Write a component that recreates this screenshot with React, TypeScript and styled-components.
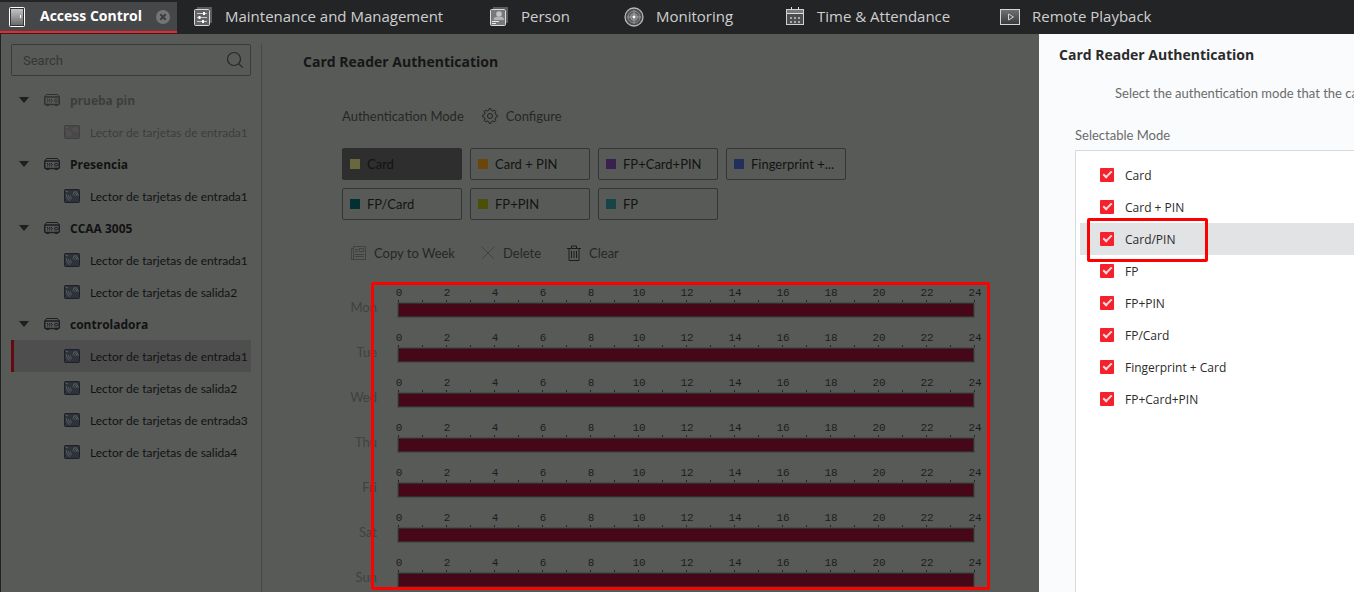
import React from "react";
import styled, { createGlobalStyle } from "styled-components";

const GlobalStyle = createGlobalStyle`
  *, *::before, *::after { box-sizing: border-box; }
  body {
    margin: 0;
    background: #585a58;
    font-family: "Open Sans", "Noto Sans", sans-serif;
    font-size: 12px;
    color: #151515;
  }
  button, input { font-family: inherit; font-size: inherit; color: inherit; }
  h1, h2, p, ul { margin: 0; padding: 0; }
  ul { list-style: none; }
`;

const Shell = styled.div`
  min-height: 100vh;
  display: flex;
  flex-direction: column;
  overflow: hidden;
`;

const TopBar = styled.nav`
  height: 34px;
  padding: 2px 0 1px;
  display: flex;
  background: #232426;
`;

const Tab = styled.button<{ $active?: boolean; $width: number }>`
  flex: 0 0 ${(p) => p.$width}px;
  display: flex;
  align-items: center;
  gap: 12px;
  border: 0;
  border-bottom: 2px solid ${(p) => (p.$active ? "#f4222c" : "transparent")};
  padding: 0 6px 0 ${(p) => (p.$active ? 8 : 16)}px;
  background: ${(p) => (p.$active ? "#464749" : "transparent")};
  color: ${(p) => (p.$active ? "#ffffff" : "#cfcfcf")};
  font-size: ${(p) => (p.$active ? 14 : 15)}px;
  font-weight: ${(p) => (p.$active ? 700 : 400)};
  line-height: 20px;
  white-space: nowrap;
  text-align: left;
  svg { flex: none; }
  svg:last-child:not(:first-child) { margin-left: auto; }
`;

const TabLabel = styled.span`
  padding-bottom: 2px;
`;

const Body = styled.div`
  flex: 1;
  display: flex;
  border-left: 1px solid #202122;
`;

const Sidebar = styled.aside`
  flex: 0 0 261px;
  min-width: 0;
  margin-top: 10px;
  padding: 0 10px;
  border-right: 1px solid #464746;
`;

const SearchBox = styled.label`
  display: flex;
  align-items: center;
  height: 32px;
  padding: 0 6px 0 11px;
  border: 1px solid #3a3b3a;
  border-radius: 2px;
`;

const SearchInput = styled.input`
  flex: 1;
  min-width: 0;
  border: 0;
  outline: 0;
  padding: 0;
  background: transparent;
  font-family: Roboto, sans-serif;
  font-size: 13px;
  &::placeholder { color: #353635; opacity: 1; }
`;

const Tree = styled.ul`
  && { margin-top: 8px; }
`;

const TreeRow = styled.button<{ $disabled?: boolean; $selected?: boolean }>`
  width: 100%;
  height: 32px;
  display: flex;
  align-items: center;
  gap: 10px;
  border: 0;
  border-left: 3px solid ${(p) => (p.$selected ? "#660a12" : "transparent")};
  padding: 0;
  background: ${(p) => (p.$selected ? "#4f4e4e" : "transparent")};
  color: ${(p) => (p.$disabled ? "#3d3d3d" : "#121212")};
  white-space: nowrap;
  svg { flex: none; }
`;

const DeviceRow = styled(TreeRow)`
  padding-left: 5px;
  font-weight: 700;
`;

const ReaderRow = styled(TreeRow)`
  padding-left: 50px;
  font-family: Lato, "Open Sans", sans-serif;
`;

const Caret = styled.span`
  margin-right: 5px;
  border: 5px solid transparent;
  border-top: 6px solid #1d1e1d;
  border-bottom: 0;
`;

const Main = styled.main`
  flex: 1 1 0;
  min-width: 0;
  padding: 17px 0 0 41px;
`;

const Title = styled.h1`
  font-size: 14px;
  line-height: 22px;
  font-weight: 700;
  color: #161616;
`;

const Content = styled.div`
  padding: 32px 0 0 39px;
  font-family: Lato, "Open Sans", sans-serif;
`;

const ConfigRow = styled.div`
  display: flex;
  align-items: center;
  gap: 18px;
  height: 22px;
  font-size: 13px;
  color: #262726;
`;

const TextButton = styled.button`
  display: flex;
  align-items: center;
  gap: 8px;
  border: 0;
  padding: 0;
  background: transparent;
  font-size: 13px;
  color: #262726;
  white-space: nowrap;
`;

const ModeGrid = styled.div`
  display: grid;
  grid-template-columns: repeat(4, 120px);
  grid-auto-rows: 32px;
  gap: 8px;
  margin-top: 21px;
`;

const ModeButton = styled.button<{ $active?: boolean }>`
  display: flex;
  align-items: center;
  gap: 7px;
  border: 1px solid ${(p) => (p.$active ? "#2c2c2c" : "#343534")};
  border-radius: 2px;
  padding: 0 7px;
  background: ${(p) => (p.$active ? "#2e2e2e" : "transparent")};
  color: #131313;
  font-size: 13px;
  white-space: nowrap;
`;

const Swatch = styled.span<{ $color: string }>`
  width: 10px;
  height: 10px;
  background: ${(p) => p.$color};
`;

const Tools = styled.div`
  display: flex;
  align-items: center;
  gap: 26px;
  height: 22px;
  margin: 22px 0 0 9px;
`;

const Schedule = styled.div`
  position: relative;
  width: 647px;
  margin-top: 18px;
  padding: 4px 0 0;
`;

const Day = styled.div`
  display: flex;
  gap: 20px;
  height: 45px;
`;

const DayName = styled.span`
  width: 35px;
  padding-top: 11px;
  line-height: 20px;
  text-align: right;
  font-size: 13px;
  color: #404140;
`;

const Track = styled.div`
  width: 578px;
`;

const Hours = styled.div`
  display: flex;
  margin: 0 -22px;
  height: 14px;
`;

const Hour = styled.span`
  flex: 0 0 48px;
  text-align: center;
  font-family: "Liberation Mono", monospace;
  font-size: 11px;
  line-height: 14px;
  color: #1c1d1c;
`;

const Ticks = styled.div`
  height: 2px;
  margin-left: 1px;
  background: repeating-linear-gradient(to right, #222322 0 1px, transparent 1px 24px);
`;

const Bar = styled.div`
  height: 16px;
  border: 2px solid #2e302f;
  outline: 1px solid #4b4c4b;
  outline-offset: -1px;
  background: #460818;
`;

const ScheduleMark = styled.div`
  position: absolute;
  inset: 0 -1px auto 29px;
  height: 308px;
  border: 3px solid #ff0000;
  border-radius: 2px;
  pointer-events: none;
`;

const Drawer = styled.aside`
  flex: 0 0 315px;
  min-width: 0;
  display: flex;
  flex-direction: column;
  overflow: hidden;
  padding-top: 10px;
  background: #fafbfd;
`;

const DrawerTitle = styled.h2`
  padding-left: 20px;
  font-size: 14px;
  line-height: 22px;
  font-weight: 700;
  color: #2b2b2b;
`;

const DrawerText = styled.p`
  font-family: Lato, "Open Sans", sans-serif;
  font-size: 13px;
  line-height: 22px;
  color: #6b6b6b;
  white-space: nowrap;
`;

const Hint = styled(DrawerText)`
  && { padding: 16px 0 0 76px; }
`;

const ListLabel = styled(DrawerText)`
  && { padding: 20px 0 0 36px; }
`;

const Options = styled.ul`
  && {
    margin: 4px 0 0 36px;
    padding: 8px 0 0 4px;
  }
  flex: 1;
  border: 1px solid #d9dadc;
  border-width: 1px 0 0 1px;
  background: #ffffff;
`;

const Option = styled.li<{ $selected?: boolean }>`
  position: relative;
  background: ${(p) => (p.$selected ? "#e2e3e5" : "transparent")};
`;

const OptionLabel = styled.label`
  display: flex;
  align-items: center;
  gap: 11px;
  height: 32px;
  padding-left: 20px;
  color: #2b2b2b;
`;

const CheckBox = styled.input`
  appearance: none;
  position: relative;
  width: 14px;
  height: 14px;
  margin: 0;
  border-radius: 1px;
  background: #f5222d;
  &::after {
    content: "";
    position: absolute;
    left: 5px;
    top: 1px;
    width: 5px;
    height: 9px;
    border: solid #ffd9da;
    border-width: 0 2px 2px 0;
    transform: rotate(45deg);
  }
`;

const OptionMark = styled.div`
  position: absolute;
  left: 7px;
  top: -5px;
  width: 121px;
  height: 44px;
  border: 3px solid #ff0000;
  border-radius: 2px;
  pointer-events: none;
`;

const DoorIcon = () => (
  <svg width="20" height="22" viewBox="0 0 20 22">
    <defs>
      <linearGradient id="door" x1="0" y1="0" x2="0" y2="1">
        <stop offset="0" stopColor="#c4c4c4" /><stop offset="1" stopColor="#6c6c6c" />
      </linearGradient>
    </defs>
    <rect x="1.5" y="1.5" width="15" height="19" rx="1" fill="#333" stroke="#fff" />
    <rect x="3" y="3" width="12" height="16" fill="url(#door)" />
    <rect x="12" y="9" width="1" height="3" fill="#fff" />
  </svg>
);

const CloseIcon = () => (
  <svg width="16" height="16" viewBox="0 0 16 16">
    <circle cx="8" cy="8" r="7" fill="#747577" />
    <path d="M5.3 5.3l5.4 5.4M10.7 5.3l-5.4 5.4" stroke="#3c3d3f" strokeWidth="2" />
  </svg>
);

const MaintenanceIcon = () => (
  <svg width="20" height="20" viewBox="0 0 20 20">
    <path d="M4 0h15v16h-2V2H4z" fill="#5c5d5f" />
    <rect x="1.5" y="2.5" width="15" height="16" rx="1" fill="#626366" stroke="#dadada" />
    <path d="M4 6.5h10M4 10.5h10M4 14.5h10" stroke="#c9c9c9" />
    <path d="M11 5v3M6.5 9v3M10 13v3" stroke="#fff" strokeWidth="2" />
  </svg>
);

const PersonIcon = () => (
  <svg width="20" height="20" viewBox="0 0 20 20">
    <path d="M4 0h15v16h-2V2H4z" fill="#5c5d5f" />
    <rect x="1.5" y="2.5" width="15" height="16" rx="1" fill="#77787a" stroke="#dadada" />
    <circle cx="10" cy="7" r="2.8" fill="#c4c4c4" />
    <path d="M4.5 13c0-3 3-3.500 5.500-3.500s5 .5 5 3.500z" fill="#b4b4b4" />
    <path d="M3 14.500h7M3 16.500h4" stroke="#e8e8e8" />
  </svg>
);

const MonitorIcon = () => (
  <svg width="20" height="20" viewBox="0 0 20 20">
    <circle cx="10" cy="10" r="9" fill="#4c4d4f" stroke="#b9b9b9" strokeWidth="1.3" />
    <circle cx="10" cy="10" r="6" fill="#5c5d5f" stroke="#8b8b8b" />
    <circle cx="10" cy="10" r="3.4" fill="#737477" stroke="#aaa" strokeWidth=".7" />
    <path d="M10 3v14M3 10h14" stroke="#a2a2a2" strokeWidth=".8" />
    <circle cx="10" cy="10" r="1.4" fill="#fff" />
  </svg>
);

const CalendarIcon = () => (
  <svg width="20" height="20" viewBox="0 0 20 20">
    <rect x="1.5" y="2.5" width="17" height="15" fill="#4c4d4f" stroke="#d0d0d0" />
    <path d="M2 4.500h16" stroke="#77787a" strokeWidth="3" />
    <path d="M6.500 0v3M13.500 0v3M2 6.500h16" stroke="#dedede" />
    <path d="M5 11h10M5 15h10" stroke="#a9a9a9" strokeWidth="2" strokeDasharray="2 2" />
  </svg>
);

const PlaybackIcon = () => (
  <svg width="20" height="18" viewBox="0 0 20 18">
    <defs>
      <linearGradient id="screen" x1="0" y1="0" x2="0" y2="1">
        <stop offset="0" stopColor="#717274" /><stop offset="1" stopColor="#38393b" />
      </linearGradient>
    </defs>
    <rect x=".5" y="1.5" width="19" height="15" fill="url(#screen)" stroke="#d5d5d5" />
    <path d="M8.5 6v6l5-3z" fill="#55565a" stroke="#d0d0d0" />
  </svg>
);

const SearchIcon = () => (
  <svg width="18" height="18" viewBox="0 0 18 18" fill="none" stroke="#262726" strokeWidth="1.2">
    <circle cx="8" cy="8" r="6.5" />
    <path d="M12.7 12.7l4 4" />
  </svg>
);

const DeviceIcon = ({ muted }: { muted?: boolean }) => {
  const ink = muted ? "#303130" : "#1b1e23";
  return (
    <svg width="16" height="14" viewBox="0 0 16 14" fill="none" stroke={ink}>
      <path d="M.5 4L2.500 1.500h11L15.500 4" />
      <rect x=".75" y="4" width="14.500" height="7.500" rx="1" strokeWidth="1.500" />
      <path d="M2 12.500h3M11 12.500h3" />
      <path d="M3 6.500h6M3 9h6" strokeDasharray="1 1" />
      <path d="M3 7.700h6" strokeWidth=".6" />
      <circle cx="12" cy="7.700" r="1.500" />
    </svg>
  );
};

const ReaderIcon = ({ muted }: { muted?: boolean }) => (
  <svg width="16" height="14" viewBox="0 0 16 14" fill="none">
    <rect x=".5" y=".5" width="15" height="13" rx="1" fill={muted ? "#4a4848" : "#2e333b"} stroke={muted ? "#414040" : "#1c1f24"} />
    <g stroke={muted ? "#5a5a5a" : "#5d6166"} strokeWidth=".9" strokeLinecap="round">
      <path d="M2.500 2.500h.6" strokeWidth="1.400" />
      <path d="M2.500 5.500c0 2 .8 4.500 2.800 6M4.600 6.500c0 1.500.5 3 1.700 4M6.600 7c0 .8.200 1.700.9 2.500" />
      <path d="M8.500 5.500c.6-1.500 2-.8 2.300.8M9.500 3.500c1.500-.8 3 .8 3.100 2.800M11 2.500c1.800 0 3 1.700 3.200 4" />
    </g>
  </svg>
);

const gearPoints = Array.from({ length: 32 }, (_, i) => {
  const radius = i % 4 < 2 ? 7.4 : 5.7;
  const angle = ((i - 0.5) * Math.PI) / 16;
  return `${(8 + radius * Math.cos(angle)).toFixed(2)},${(8 + radius * Math.sin(angle)).toFixed(2)}`;
}).join(" ");

const GearIcon = () => (
  <svg width="16" height="16" viewBox="0 0 16 16" fill="none" stroke="#1f201f">
    <polygon points={gearPoints} strokeLinejoin="round" />
    <circle cx="8" cy="8" r="2.5" />
  </svg>
);

const CopyIcon = () => (
  <svg width="15" height="16" viewBox="0 0 15 16" fill="none" stroke="#414241">
    <path d="M2.5 3.5H.5v11h12" />
    <rect x="2.5" y="1.5" width="12" height="13" />
    <rect x="8.5" y="3.5" width="4" height="3" />
    <path d="M4 4.5h3M4 6.5h3M4 9.5h9M4 11.5h9" />
  </svg>
);

const CrossIcon = () => (
  <svg width="14" height="14" viewBox="0 0 14 14" fill="none" stroke="#414241">
    <path d="M1 1l12 12M13 1L1 13" />
  </svg>
);

const TrashIcon = () => (
  <svg width="14" height="16" viewBox="0 0 14 16" fill="none" stroke="#1c1d1c">
    <path d="M0 3.5h14M4.5 3V1h5v2M2 4v11.500h10V4M4.500 6v7M7 6v7M9.500 6v7" />
  </svg>
);

const devices = [
  { name: "prueba pin", muted: true, readers: ["Lector de tarjetas de entrada1"] },
  { name: "Presencia", readers: ["Lector de tarjetas de entrada1"] },
  { name: "CCAA 3005", readers: ["Lector de tarjetas de entrada1", "Lector de tarjetas de salida2"] },
  {
    name: "controladora",
    selected: 0,
    readers: [
      "Lector de tarjetas de entrada1",
      "Lector de tarjetas de salida2",
      "Lector de tarjetas de entrada3",
      "Lector de tarjetas de salida4",
    ],
  },
];

const modes = [
  { name: "Card", color: "#67683e" },
  { name: "Card + PIN", color: "#6b4608" },
  { name: "FP+Card+PIN", color: "#38204f" },
  { name: "Fingerprint +...", color: "#20305a" },
  { name: "FP/Card", color: "#023030" },
  { name: "FP+PIN", color: "#4b4f08" },
  { name: "FP", color: "#174444" },
];

const days = ["Mon", "Tue", "Wed", "Thu", "Fri", "Sat", "Sun"];
const hours = Array.from({ length: 13 }, (_, i) => i * 2);
const options = ["Card", "Card + PIN", "Card/PIN", "FP", "FP+PIN", "FP/Card", "Fingerprint + Card", "FP+Card+PIN"];

export default function App() {
  return (
    <Shell>
      <GlobalStyle />
      <TopBar>
        <Tab $active $width={177}><DoorIcon /><TabLabel>Access Control</TabLabel><CloseIcon /></Tab>
        <Tab $width={296}><MaintenanceIcon /><TabLabel>Maintenance and Management</TabLabel></Tab>
        <Tab $width={135}><PersonIcon /><TabLabel>Person</TabLabel></Tab>
        <Tab $width={161}><MonitorIcon /><TabLabel>Monitoring</TabLabel></Tab>
        <Tab $width={215}><CalendarIcon /><TabLabel>Time &amp; Attendance</TabLabel></Tab>
        <Tab $width={200}><PlaybackIcon /><TabLabel>Remote Playback</TabLabel></Tab>
      </TopBar>
      <Body>
        <Sidebar>
          <SearchBox>
            <SearchInput type="text" placeholder="Search" aria-label="Search" />
            <SearchIcon />
          </SearchBox>
          <Tree>
            {devices.map((device) => (
              <li key={device.name}>
                <DeviceRow $disabled={device.muted}>
                  <Caret />
                  <DeviceIcon muted={device.muted} />
                  {device.name}
                </DeviceRow>
                <ul>
                  {device.readers.map((reader, i) => (
                    <li key={reader}>
                      <ReaderRow $disabled={device.muted} $selected={device.selected === i}>
                        <ReaderIcon muted={device.muted} />
                        {reader}
                      </ReaderRow>
                    </li>
                  ))}
                </ul>
              </li>
            ))}
          </Tree>
        </Sidebar>
        <Main>
          <Title>Card Reader Authentication</Title>
          <Content>
            <ConfigRow>
              <span>Authentication Mode</span>
              <TextButton><GearIcon />Configure</TextButton>
            </ConfigRow>
            <ModeGrid>
              {modes.map((mode, i) => (
                <ModeButton key={mode.name} $active={i === 0}>
                  <Swatch $color={mode.color} />
                  {mode.name}
                </ModeButton>
              ))}
            </ModeGrid>
            <Tools>
              <TextButton><CopyIcon />Copy to Week</TextButton>
              <TextButton><CrossIcon />Delete</TextButton>
              <TextButton><TrashIcon />Clear</TextButton>
            </Tools>
            <Schedule>
              {days.map((day) => (
                <Day key={day}>
                  <DayName>{day}</DayName>
                  <Track>
                    <Hours>{hours.map((hour) => <Hour key={hour}>{hour}</Hour>)}</Hours>
                    <Ticks />
                    <Bar />
                  </Track>
                </Day>
              ))}
              <ScheduleMark />
            </Schedule>
          </Content>
        </Main>
        <Drawer>
          <DrawerTitle>Card Reader Authentication</DrawerTitle>
          <Hint>Select the authentication mode that the ca</Hint>
          <ListLabel>Selectable Mode</ListLabel>
          <Options>
            {options.map((option, i) => (
              <Option key={option} $selected={i === 2}>
                <OptionLabel>
                  <CheckBox type="checkbox" defaultChecked />
                  {option}
                </OptionLabel>
                {i === 2 && <OptionMark />}
              </Option>
            ))}
          </Options>
        </Drawer>
      </Body>
    </Shell>
  );
}
